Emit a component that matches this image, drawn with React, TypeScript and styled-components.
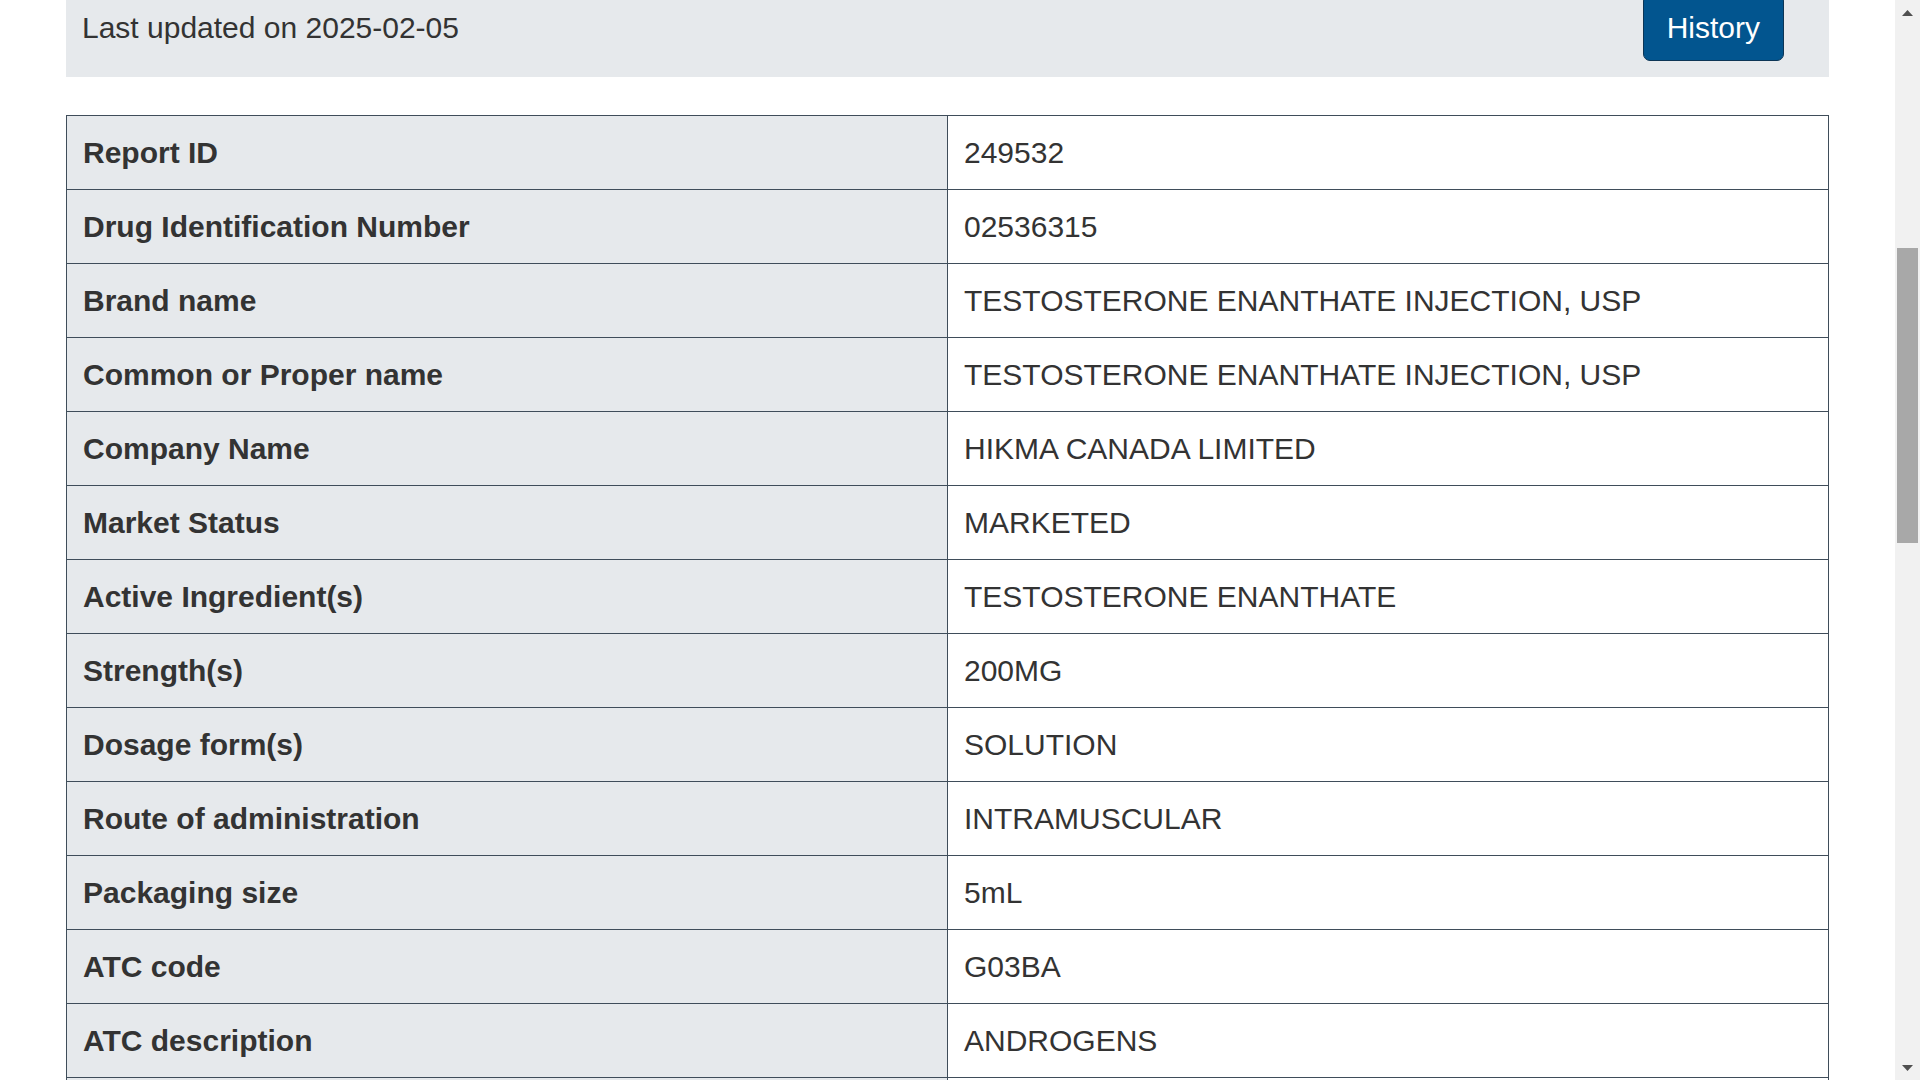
import React, { useLayoutEffect, useRef } from "react";
import styled, { createGlobalStyle } from "styled-components";

const GlobalStyle = createGlobalStyle`
  html, body {
    margin: 0;
    padding: 0;
    height: 100%;
    overflow: hidden;
    background: #ffffff;
    font-family: "Liberation Sans", Arial, Helvetica, sans-serif;
  }
  #root { height: 100%; }
`;

const Page = styled.div`
  display: flex;
  width: 1920px;
  height: 1080px;
  background: #ffffff;
`;

const Viewport = styled.div`
  flex: 1;
  height: 100%;
  overflow: hidden;
`;

const Content = styled.main`
  display: flex;
  flex-direction: column;
  gap: 38px;
  padding: 0 66px 60px;
  color: #333333;
  font-size: 30px;
  line-height: 41px;
`;

const UpdateBar = styled.section`
  display: flex;
  align-items: center;
  justify-content: space-between;
  background: #e6e9ec;
  padding: 16px 45px 16px 16px;
`;

const UpdatedText = styled.p`
  margin: 0;
  font-size: 30px;
  line-height: 41px;
  color: #333333;
`;

const HistoryButton = styled.button`
  font-family: "Liberation Sans", Arial, Helvetica, sans-serif;
  font-size: 30px;
  line-height: 41px;
  color: #ffffff;
  background: #02558f;
  border: 1px solid #0c3556;
  border-radius: 7px;
  padding: 12px 23px;
  cursor: pointer;
`;

const DetailsTable = styled.table`
  width: 100%;
  border-collapse: collapse;
  table-layout: fixed;
  border: 1px solid #3f4d5a;
`;

const HalfColumn = styled.col`
  width: 50%;
`;

const Label = styled.th`
  box-sizing: border-box;
  text-align: left;
  font-weight: bold;
  background: #e6e9ec;
  border: 1px solid #3f4d5a;
  padding: 16px;
  height: 74px;
  line-height: 41px;
  color: #333333;
  vertical-align: middle;
`;

const Value = styled.td`
  box-sizing: border-box;
  background: #ffffff;
  border: 1px solid #3f4d5a;
  padding: 16px;
  height: 74px;
  line-height: 41px;
  color: #333333;
  vertical-align: middle;
`;

const ScrollTrack = styled.div`
  width: 25px;
  height: 100%;
  background: #f1f1f1;
  display: flex;
  flex-direction: column;
  align-items: center;
`;

const ArrowButton = styled.div`
  height: 25px;
  width: 25px;
  display: flex;
  align-items: center;
  justify-content: center;
  flex: none;
`;

const ThumbArea = styled.div`
  flex: 1;
  width: 100%;
  display: flex;
  flex-direction: column;
  align-items: center;
  padding-top: 223px;
`;

const Thumb = styled.div`
  width: 21px;
  height: 295px;
  background: #a8a8a8;
`;

const rows: [string, string][] = [
  ["Report ID", "249532"],
  ["Drug Identification Number", "02536315"],
  ["Brand name", "TESTOSTERONE ENANTHATE INJECTION, USP"],
  ["Common or Proper name", "TESTOSTERONE ENANTHATE INJECTION, USP"],
  ["Company Name", "HIKMA CANADA LIMITED"],
  ["Market Status", "MARKETED"],
  ["Active Ingredient(s)", "TESTOSTERONE ENANTHATE"],
  ["Strength(s)", "200MG"],
  ["Dosage form(s)", "SOLUTION"],
  ["Route of administration", "INTRAMUSCULAR"],
  ["Packaging size", "5mL"],
  ["ATC code", "G03BA"],
  ["ATC description", "ANDROGENS"],
  ["Reason for shortage", "Demand increase for the drug."],
  ["Shortage status", "Actual shortage"],
];

export default function App() {
  const viewportRef = useRef<HTMLDivElement>(null);

  useLayoutEffect(() => {
    if (viewportRef.current) viewportRef.current.scrollTop = 22;
  }, []);

  return (
    <>
      <GlobalStyle />
      <Page>
        <Viewport ref={viewportRef}>
          <Content>
            <UpdateBar>
              <UpdatedText>Last updated on 2025-02-05</UpdatedText>
              <HistoryButton type="button">History</HistoryButton>
            </UpdateBar>
            <DetailsTable>
              <colgroup>
                <HalfColumn />
                <HalfColumn />
              </colgroup>
              <tbody>
                {rows.map(([label, value]) => (
                  <tr key={label}>
                    <Label scope="row">{label}</Label>
                    <Value>{value}</Value>
                  </tr>
                ))}
              </tbody>
            </DetailsTable>
          </Content>
        </Viewport>
        <ScrollTrack>
          <ArrowButton>
            <svg width="11" height="6" viewBox="0 0 11 6">
              <polygon points="0,6 11,6 5.5,0" fill="#505050" />
            </svg>
          </ArrowButton>
          <ThumbArea>
            <Thumb />
          </ThumbArea>
          <ArrowButton>
            <svg width="11" height="6" viewBox="0 0 11 6">
              <polygon points="0,0 11,0 5.5,6" fill="#505050" />
            </svg>
          </ArrowButton>
        </ScrollTrack>
      </Page>
    </>
  );
}
